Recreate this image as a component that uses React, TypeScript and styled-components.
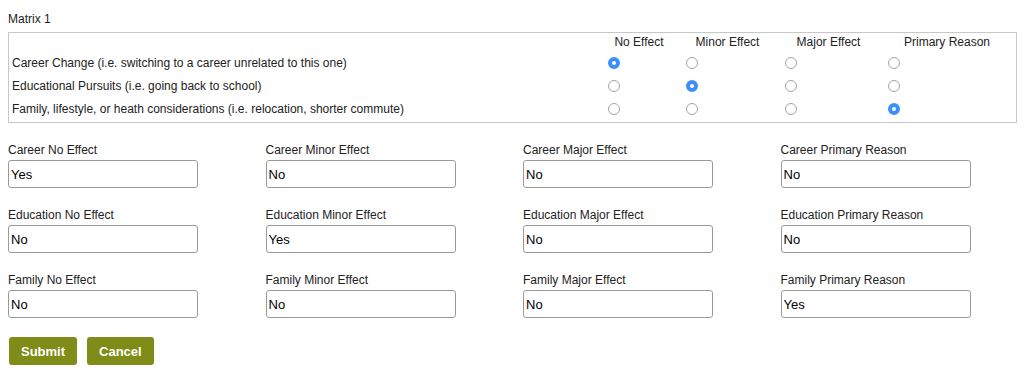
import React, { useState } from 'react'
import styled, { createGlobalStyle } from 'styled-components'

const GlobalStyle = createGlobalStyle`
  body {
    margin: 8px;
    background: #fff;
    font-family: "Liberation Sans", Arial, Helvetica, sans-serif;
    color: #222;
  }
`

const Title = styled.div`
  font-size: 12px;
  line-height: 14px;
  margin: 4px 0 6px;
`

const MatrixBox = styled.div`
  box-sizing: border-box;
  width: 1009px;
  border: 1px solid #c8c8c8;
  padding: 0 2px 2px 0;
  display: grid;
  grid-template-columns: 1fr 78px 99px 103px 134px;
  grid-auto-rows: 23px;
  grid-template-rows: 18px;
  font-size: 12px;
`

const HeadCell = styled.div`
  display: flex;
  align-items: center;
  justify-content: center;
`

const RowLabel = styled.div`
  display: flex;
  align-items: center;
  padding-left: 3px;
`

const RadioCell = styled.div`
  display: flex;
  align-items: center;
  padding-left: 8px;
`

const Radio = styled.input`
  appearance: none;
  margin: 0;
  width: 12px;
  height: 12px;
  border-radius: 50%;
  border: 1px solid #a4a4a4;
  background: #fff;
  box-sizing: border-box;
  &:checked {
    border: 4px solid #3d8ef6;
    background: #fff;
  }
`

const FieldGrid = styled.div`
  display: grid;
  grid-template-columns: repeat(4, 257.5px);
  row-gap: 20px;
  margin-top: 20px;
`

const Field = styled.div`
  display: flex;
  flex-direction: column;
`

const FieldLabel = styled.label`
  font-size: 12px;
  line-height: 14px;
  margin-bottom: 3px;
`

const TextInput = styled.input`
  box-sizing: border-box;
  width: 190px;
  height: 28px;
  border: 1px solid #9a9a9a;
  border-radius: 3px;
  padding: 0 2px;
  font-family: inherit;
  font-size: 13px;
  color: #000;
  outline: none;
`

const Actions = styled.div`
  display: flex;
  gap: 10px;
  margin-top: 19px;
  padding-left: 1px;
`

const Button = styled.button`
  height: 28px;
  padding: 0 12px;
  border: none;
  border-radius: 3px;
  background: #7f8c17;
  color: #fff;
  font-family: inherit;
  font-weight: bold;
  font-size: 13px;
  cursor: pointer;
`

const columns = ['No Effect', 'Minor Effect', 'Major Effect', 'Primary Reason']

const rows = [
  { key: 'Career', label: 'Career Change (i.e. switching to a career unrelated to this one)' },
  { key: 'Education', label: 'Educational Pursuits (i.e. going back to school)' },
  { key: 'Family', label: 'Family, lifestyle, or heath considerations (i.e. relocation, shorter commute)' },
]

const App = () => {
  const [picked, setPicked] = useState<number[]>([0, 1, 3])

  const choose = (row: number, col: number) => {
    const next = [...picked]
    next[row] = col
    setPicked(next)
  }

  return (
    <>
      <GlobalStyle />
      <Title>Matrix 1</Title>
      <MatrixBox>
        <div />
        {columns.map((c) => (
          <HeadCell key={c}>{c}</HeadCell>
        ))}
        {rows.map((r, ri) => (
          <React.Fragment key={r.key}>
            <RowLabel>{r.label}</RowLabel>
            {columns.map((c, ci) => (
              <RadioCell key={c}>
                <Radio
                  type="radio"
                  name={r.key}
                  checked={picked[ri] === ci}
                  onChange={() => choose(ri, ci)}
                />
              </RadioCell>
            ))}
          </React.Fragment>
        ))}
      </MatrixBox>
      <FieldGrid>
        {rows.map((r, ri) =>
          columns.map((c, ci) => (
            <Field key={r.key + c}>
              <FieldLabel>{`${r.key} ${c}`}</FieldLabel>
              <TextInput readOnly value={picked[ri] === ci ? 'Yes' : 'No'} />
            </Field>
          ))
        )}
      </FieldGrid>
      <Actions>
        <Button>Submit</Button>
        <Button>Cancel</Button>
      </Actions>
    </>
  )
}

export default App
